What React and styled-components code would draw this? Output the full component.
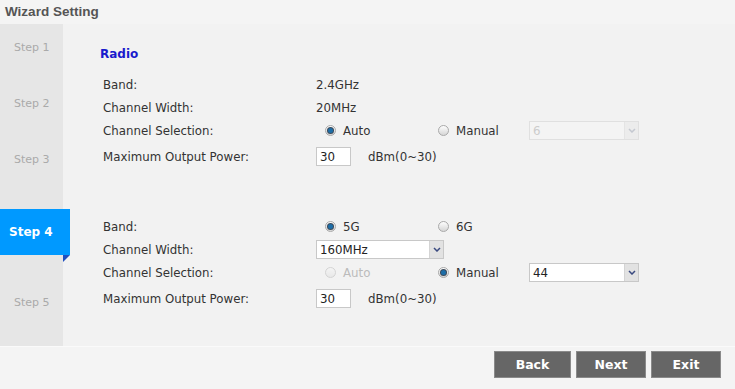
import React from "react";
import styled, { createGlobalStyle, css } from "styled-components";

const Global = createGlobalStyle`
  html, body { margin: 0; padding: 0; background: #f4f4f4; }
  body { font-family: "DejaVu Sans", "Liberation Sans", sans-serif; }
  * { box-sizing: border-box; }
`;

const Page = styled.div`
  width: 735px;
  height: 389px;
  display: flex;
  flex-direction: column;
  background: #f4f4f4;
  overflow: hidden;
`;

const Header = styled.div`
  height: 24px;
  flex: none;
  display: flex;
  align-items: center;
  padding: 0 0 2px 5px;
  font-family: "Liberation Sans", sans-serif;
  font-size: 13.5px;
  font-weight: bold;
  color: #555;
  background: #f4f4f4;
`;

const Body = styled.div`
  flex: 1;
  display: flex;
  min-height: 0;
`;

const Sidebar = styled.div`
  width: 63px;
  flex: none;
  background: #e6e6e6;
  display: flex;
  flex-direction: column;
  gap: 38px;
  padding-top: 14px;
  position: relative;
  z-index: 1;
`;

const Step = styled.div`
  height: 18px;
  display: flex;
  align-items: center;
  padding-left: 14px;
  font-size: 11px;
  color: #aaa;
  ${(p) =>
    p.$active &&
    css`
      height: 46px;
      width: 70px;
      margin-top: 3px;
      background: #0099ff;
      color: #fff;
      font-weight: bold;
      font-size: 12px;
      padding-left: 9px;
      position: relative;
      &::after {
        content: "";
        position: absolute;
        left: 63px;
        top: 46px;
        border-top: 7px solid #1f4fc0;
        border-right: 7px solid transparent;
      }
    `}
`;

const Content = styled.div`
  flex: 1;
  background: #f2f2f2;
  padding: 21px 0 0 37px;
`;

const Title = styled.div`
  height: 18px;
  display: flex;
  align-items: center;
  font-size: 12px;
  font-weight: bold;
  color: #1a1acc;
  margin-bottom: 10px;
`;

const Section = styled.div`
  display: flex;
  flex-direction: column;
  padding-left: 3px;
  margin-top: ${(p) => p.$gap || 0}px;
`;

const Row = styled.div`
  height: 23px;
  display: flex;
  align-items: center;
  margin-top: ${(p) => p.$mt || 0}px;
  font-size: 11.8px;
  color: #333;
`;

const Label = styled.div`
  width: 213px;
  flex: none;
`;

const Value = styled.div``;

const Radios = styled.div`
  display: flex;
  align-items: center;
  padding-left: 9px;
`;

const Option = styled.label`
  display: flex;
  align-items: center;
  gap: 7px;
  width: ${(p) => p.$w || "auto"};
  color: ${(p) => (p.$disabled ? "#bbb" : "#333")};
`;

const Dot = styled.span`
  width: 11px;
  height: 11px;
  border-radius: 50%;
  border: 1px solid ${(p) => (p.$disabled ? "#d4d4d4" : "#a9a9a9")};
  background: ${(p) =>
    p.$disabled
      ? "linear-gradient(#f4f4f4, #e8e8e8)"
      : "linear-gradient(#fdfdfd, #d6d6d6)"};
  display: flex;
  align-items: center;
  justify-content: center;
  &::after {
    content: "";
    display: ${(p) => (p.$checked ? "block" : "none")};
    width: 5px;
    height: 5px;
    border-radius: 50%;
    background: #1d6ea8;
    box-shadow: 0 0 0 1px #3d4a5a;
  }
`;

const Select = styled.div`
  width: ${(p) => p.$w}px;
  height: 19px;
  display: flex;
  border: 1px solid ${(p) => (p.$disabled ? "#e0e0e0" : "#c8c8c8")};
  background: ${(p) => (p.$disabled ? "#f4f4f4" : "#fff")};
  color: ${(p) => (p.$disabled ? "#ccc" : "#222")};
  font-size: 11.8px;
`;

const SelectText = styled.div`
  flex: 1;
  display: flex;
  align-items: center;
  padding-left: 3px;
`;

const Arrow = styled.div`
  width: 14px;
  display: flex;
  align-items: center;
  justify-content: center;
  background: ${(p) => (p.$disabled ? "#ececec" : "#e2e2e2")};
  border-left: 1px solid ${(p) => (p.$disabled ? "#e4e4e4" : "#d4d4d4")};
`;

const Input = styled.div`
  width: 35px;
  height: 19px;
  border: 1px solid #c8c8c8;
  background: #fff;
  display: flex;
  align-items: center;
  padding-left: 3px;
  font-size: 11.8px;
  color: #222;
`;

const Unit = styled.span`
  margin-left: 17px;
`;

const Footer = styled.div`
  height: 43px;
  flex: none;
  border-top: 1px solid #fafafa;
  background: #f4f4f4;
  display: flex;
  justify-content: flex-end;
  align-items: flex-start;
  padding: 4px 14px 0 0;
  gap: 5px;
`;

const Button = styled.button`
  width: ${(p) => p.$w}px;
  height: 27px;
  background: #666;
  border: 1px solid #8a8a8a;
  color: #fff;
  font-family: "DejaVu Sans", sans-serif;
  font-weight: bold;
  font-size: 12.5px;
  padding: 0;
`;

const Chevron = ({ disabled }) => (
  <svg width="8" height="5" viewBox="0 0 8 5">
    <path
      d="M1 1 L4 4 L7 1"
      fill="none"
      stroke={disabled ? "#c4c8d0" : "#3a4a80"}
      strokeWidth="1.5"
    />
  </svg>
);

const Sel = ({ w, value, disabled }) => (
  <Select $w={w} $disabled={disabled}>
    <SelectText>{value}</SelectText>
    <Arrow $disabled={disabled}>
      <Chevron disabled={disabled} />
    </Arrow>
  </Select>
);

const Radio = ({ label, checked, disabled, w }) => (
  <Option $w={w} $disabled={disabled}>
    <Dot $checked={checked} $disabled={disabled} />
    {label}
  </Option>
);

export default function App() {
  return (
    <Page>
      <Global />
      <Header>Wizard Setting</Header>
      <Body>
        <Sidebar>
          <Step>Step 1</Step>
          <Step>Step 2</Step>
          <Step>Step 3</Step>
          <Step $active>Step 4</Step>
          <Step>Step 5</Step>
        </Sidebar>
        <Content>
          <Title>Radio</Title>
          <Section>
            <Row>
              <Label>Band:</Label>
              <Value>2.4GHz</Value>
            </Row>
            <Row>
              <Label>Channel Width:</Label>
              <Value>20MHz</Value>
            </Row>
            <Row>
              <Label>Channel Selection:</Label>
              <Radios>
                <Radio label="Auto" checked w="113px" />
                <Radio label="Manual" w="91px" />
                <Sel w={110} value="6" disabled />
              </Radios>
            </Row>
            <Row $mt={3}>
              <Label>Maximum Output Power:</Label>
              <Input>30</Input>
              <Unit>dBm(0~30)</Unit>
            </Row>
          </Section>
          <Section $gap={47}>
            <Row>
              <Label>Band:</Label>
              <Radios>
                <Radio label="5G" checked w="113px" />
                <Radio label="6G" />
              </Radios>
            </Row>
            <Row>
              <Label>Channel Width:</Label>
              <Sel w={128} value="160MHz" />
            </Row>
            <Row>
              <Label>Channel Selection:</Label>
              <Radios>
                <Radio label="Auto" disabled w="113px" />
                <Radio label="Manual" checked w="91px" />
                <Sel w={110} value="44" />
              </Radios>
            </Row>
            <Row $mt={3}>
              <Label>Maximum Output Power:</Label>
              <Input>30</Input>
              <Unit>dBm(0~30)</Unit>
            </Row>
          </Section>
        </Content>
      </Body>
      <Footer>
        <Button $w={77}>Back</Button>
        <Button $w={70}>Next</Button>
        <Button $w={70}>Exit</Button>
      </Footer>
    </Page>
  );
}
